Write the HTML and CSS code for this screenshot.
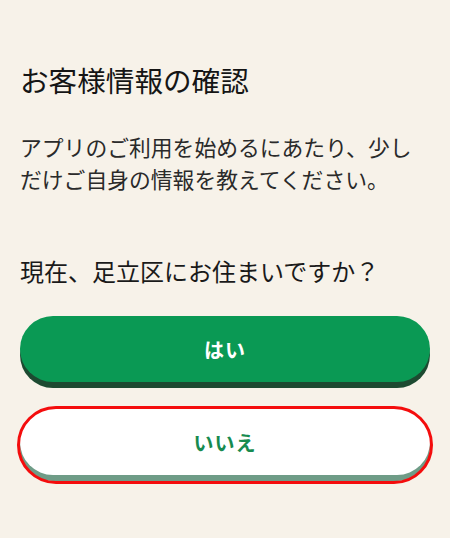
FILE: index.html
```html
<!DOCTYPE html>
<html lang="ja">
<head>
<meta charset="utf-8">
<link rel="stylesheet" href="styles.css">
</head>
<body>
<main class="page">
  <h1 class="title">お客様情報の確認</h1>
  <p class="lead">アプリのご利用を始めるにあたり、少しだけご自身の情報を教えてください。</p>
  <p class="question">現在、足立区にお住まいですか？</p>
  <div class="actions">
    <button class="btn btn-yes" type="button"><span class="btn-face">はい</span></button>
    <button class="btn btn-no" type="button"><span class="btn-face">いいえ</span></button>
  </div>
</main>
</body>
</html>
```
FILE: styles.css
```css
html, body {
  margin: 0;
  padding: 0;
  background: #f7f2e9;
}
body {
  font-family: "Noto Sans CJK JP", "Noto Sans", sans-serif;
  color: #1e1e1e;
  width: 450px;
  height: 538px;
  overflow: hidden;
}
.page {
  padding: 60px 20px 0;
}
.title {
  margin: 0;
  font-size: 28.6px;
  line-height: 40px;
  font-weight: 400;
  color: #151515;
}
.lead {
  margin: 31px 0 0;
  font-size: 21.8px;
  line-height: 31.5px;
  font-weight: 400;
  color: #2a2a2a;
}
.question {
  margin: 60px 0 0;
  font-size: 24px;
  line-height: 34px;
  font-weight: 400;
  color: #1a1a1a;
}
.actions {
  margin-top: 28px;
  display: flex;
  flex-direction: column;
  gap: 21px;
}
.btn {
  display: block;
  width: 100%;
  height: 72px;
  padding: 0 0 6px;
  margin: 0;
  border: 0;
  border-radius: 36px;
  background: transparent;
  font-family: inherit;
  cursor: pointer;
}
.btn-face {
  display: flex;
  align-items: center;
  justify-content: center;
  height: 66px;
  border-radius: 33px;
  font-size: 20px;
  font-weight: 700;
  letter-spacing: 1px;
}
.btn-yes .btn-face {
  background: #0a9954;
  color: #ffffff;
  box-shadow: 0 6px 0 #1d4a31;
}
.btn-no {
  outline: 3px solid #f40d0d;
}
.btn-no .btn-face {
  background: #ffffff;
  color: #178b50;
  box-shadow: 0 6px 0 #6f9c87;
}
```
